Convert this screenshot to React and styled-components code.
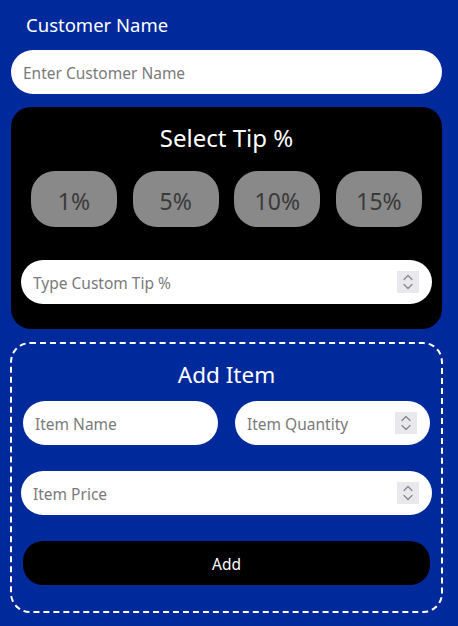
import React from "react";
import styled, { createGlobalStyle } from "styled-components";

const Global = createGlobalStyle`
  html, body { margin: 0; padding: 0; background: #002a9b; }
  body { font-family: "Noto Sans", "Open Sans", sans-serif; }
  * { box-sizing: border-box; }
`;

const Page = styled.div`
  width: 458px;
  height: 626px;
  background: #002a9b;
  display: flex;
  flex-direction: column;
  padding: 0 16px 0 11px;
`;

const Label = styled.div`
  color: #fff;
  font-size: 18.5px;
  line-height: 24px;
  padding: 13px 0 0 15px;
  height: 50px;
`;

const Field = styled.div`
  display: flex;
  align-items: center;
  background: #fff;
  border-radius: 22px;
  height: 44px;
  padding: 0 13px 0 12px;
  margin: ${(p) => p.$m || "0"};
  width: ${(p) => p.$w || "auto"};
`;

const Input = styled.input`
  flex: 1;
  min-width: 0;
  border: none;
  outline: none;
  background: transparent;
  font-family: inherit;
  font-size: 15.5px;
  color: #333;
  padding: 2px 0 0;
  &::placeholder { color: #7a7a7a; }
`;

const Spin = styled.div`
  width: 22px;
  height: 22px;
  background: #e9e9ed;
  display: flex;
  align-items: center;
  justify-content: center;
`;

const Spinner = () => (
  <Spin>
    <svg width="12" height="18" viewBox="0 0 12 18" fill="none" stroke="#85858a" strokeWidth="1.2" strokeLinecap="round" strokeLinejoin="round">
      <path d="M2 6.5 L6 2.5 L10 6.5" />
      <path d="M2 11.5 L6 15.5 L10 11.5" />
    </svg>
  </Spin>
);

const Card = styled.div`
  margin-top: 13px;
  background: #000;
  border-radius: 20px;
  padding: 14px 10px 25px;
  display: flex;
  flex-direction: column;
`;

const Heading = styled.div`
  color: #fff;
  text-align: center;
  font-size: ${(p) => p.$size || 22}px;
  line-height: 34px;
`;

const TipRow = styled.div`
  display: flex;
  justify-content: space-between;
  padding: 0 10px;
  margin: 16px 0 33px;
`;

const TipButton = styled.button`
  width: 86px;
  height: 56px;
  border: none;
  border-radius: 24px;
  background: #898989;
  color: #3a3a3a;
  font-family: inherit;
  font-size: 23px;
  padding: 3px 0 0;
`;

const ItemBox = styled.div`
  margin-top: 13px;
  border: 2px dashed #fff;
  border-radius: 20px;
  height: 271px;
  margin-left: -1px;
  margin-right: -1px;
  padding: 14px 9px 0;
  display: flex;
  flex-direction: column;
`;

const TwoCol = styled.div`
  display: flex;
  justify-content: space-between;
  padding: 0 2px;
  margin-top: 9px;
`;

const AddButton = styled.button`
  margin: 26px 2px 0;
  height: 44px;
  border: none;
  border-radius: 20px;
  background: #000;
  color: #fff;
  font-family: inherit;
  font-size: 15.5px;
  padding: 2px 0 0;
`;

export default function App() {
  return (
    <Page>
      <Global />
      <Label>Customer Name</Label>
      <Field>
        <Input placeholder="Enter Customer Name" />
      </Field>
      <Card>
        <Heading $size={24}>Select Tip %</Heading>
        <TipRow>
          {["1%", "5%", "10%", "15%"].map((t) => (
            <TipButton key={t}>{t}</TipButton>
          ))}
        </TipRow>
        <Field>
          <Input placeholder="Type Custom Tip %" />
          <Spinner />
        </Field>
      </Card>
      <ItemBox>
        <Heading $size={22.5}>Add Item</Heading>
        <TwoCol>
          <Field $w="195px">
            <Input placeholder="Item Name" />
          </Field>
          <Field $w="195px">
            <Input placeholder="Item Quantity" />
            <Spinner />
          </Field>
        </TwoCol>
        <Field $m="26px 0 0">
          <Input placeholder="Item Price" />
          <Spinner />
        </Field>
        <AddButton>Add</AddButton>
      </ItemBox>
    </Page>
  );
}
